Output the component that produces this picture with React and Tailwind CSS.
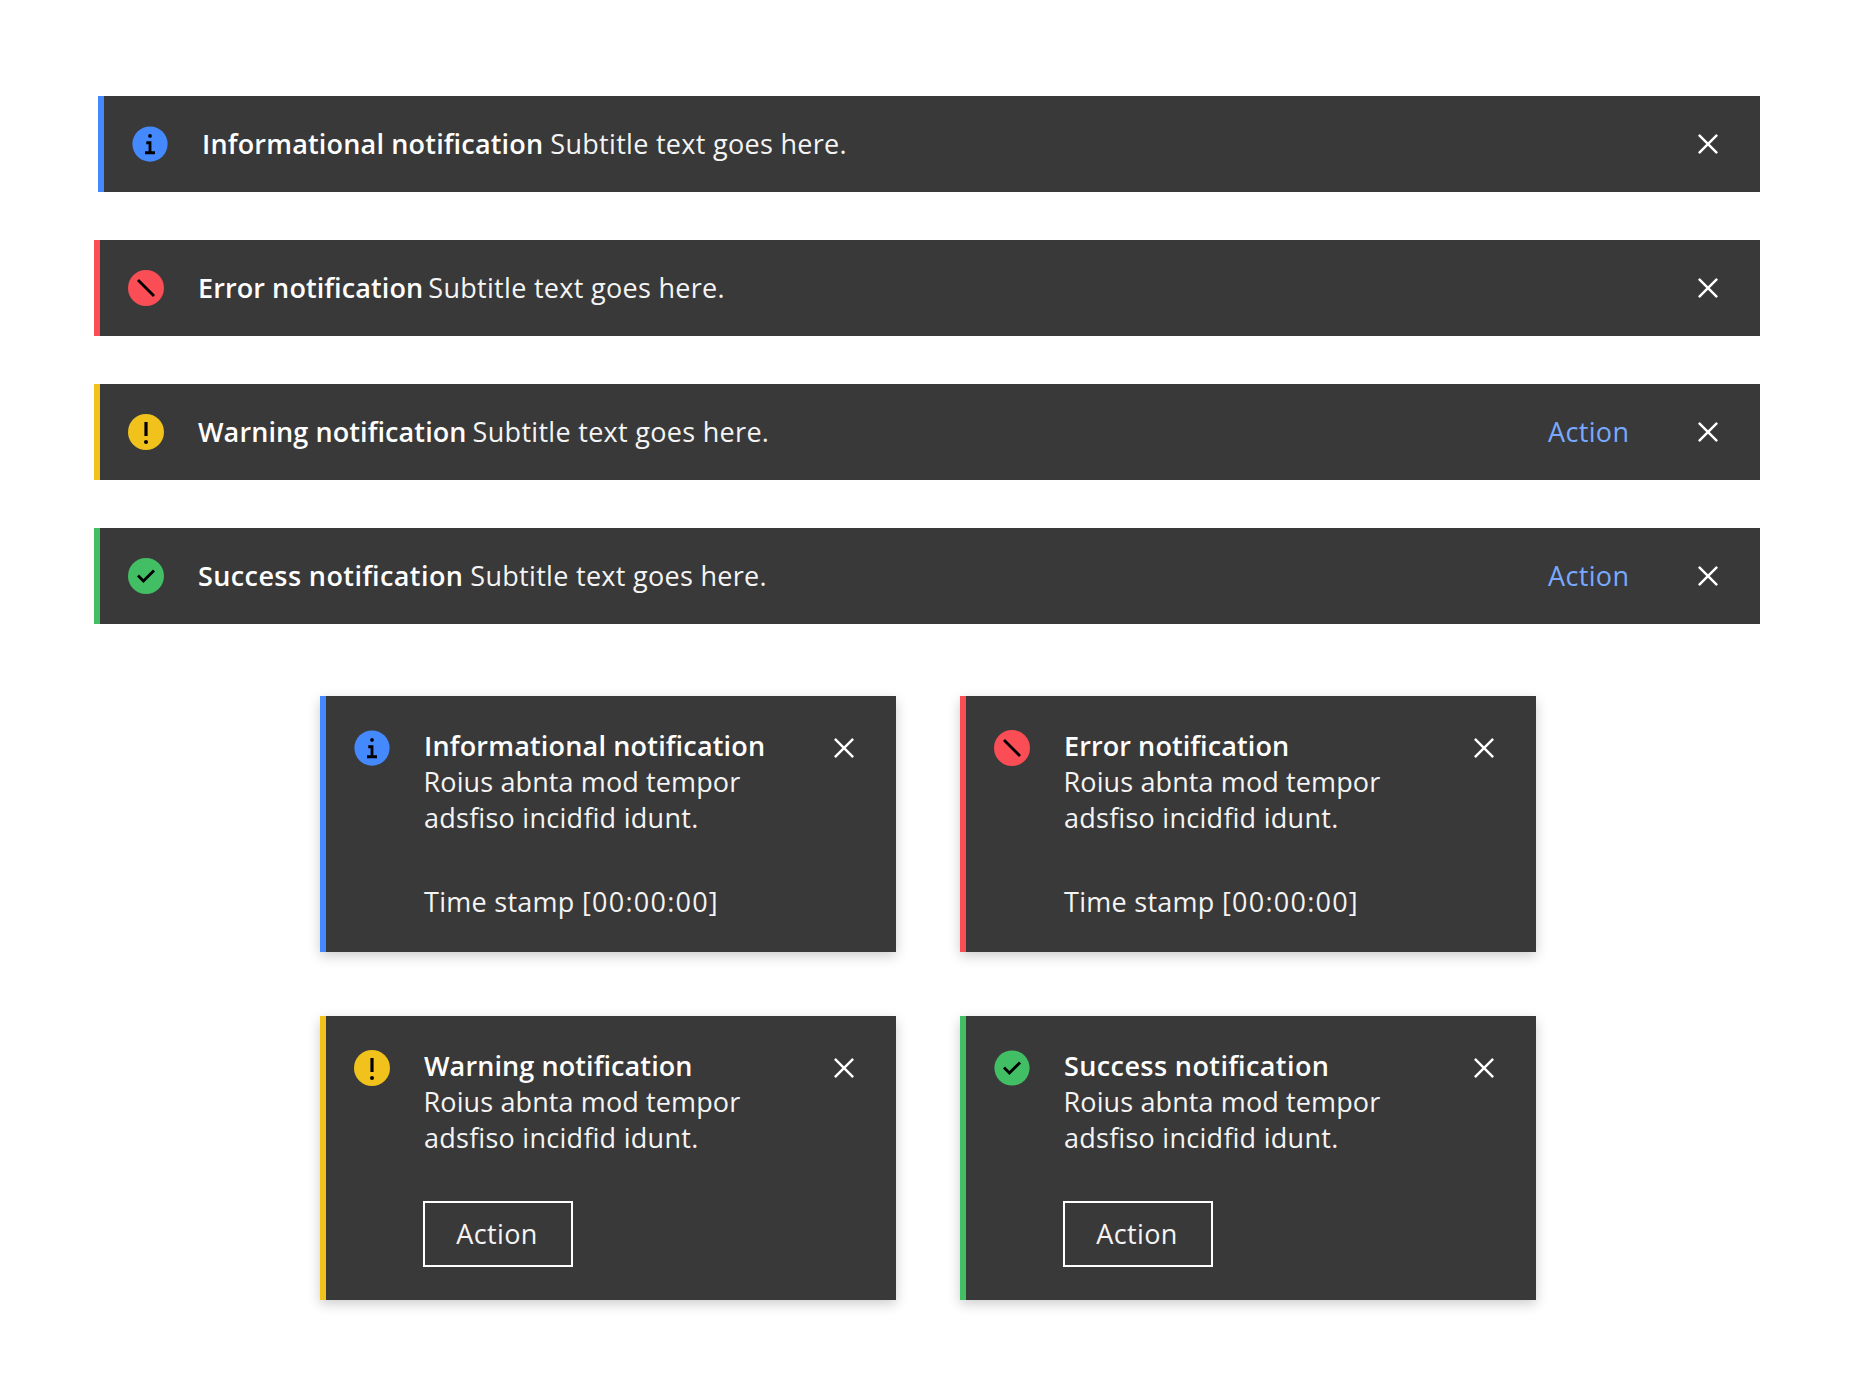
const KINDS = {
  info: {
    border: 'border-[#4589ff]',
    title: 'Informational notification',
    titleClass: 'tracking-[0.18px]',
    gap: 'ml-[7px]',
  },
  error: {
    border: 'border-[#fa4d56]',
    title: 'Error notification',
    titleClass: 'tracking-[0.1px]',
    gap: 'ml-[5px]',
  },
  warning: {
    border: 'border-[#f1c21b]',
    title: 'Warning notification',
    titleClass: 'tracking-[0.1px]',
    gap: 'ml-[6px]',
  },
  success: {
    border: 'border-[#42be65]',
    title: 'Success notification',
    titleClass: 'tracking-[0.4px]',
    gap: 'ml-[7px]',
  },
};

function StatusIcon({ kind, small }) {
  if (kind === 'info') {
    return (
      <svg className="size-10 shrink-0" viewBox="0 0 32 32">
        <circle cx="16" cy="16" r="14.1" fill="#4589ff" />
        <path d="M16 8a1.5 1.5 0 1 1-1.5 1.5A1.5 1.5 0 0 1 16 8Zm4 16.125h-8v-2.25h2.875v-5.75H13v-2.25h4.125v8H20Z" fill="#000" />
      </svg>
    );
  }
  if (kind === 'error') {
    return (
      <svg className="size-10 shrink-0" viewBox="0 0 20 20">
        <circle cx="10" cy="10" r="9" fill="#fa4d56" />
        <path d="M13.5 14.5l-8-8 1-1 8 8z" fill="#000" />
      </svg>
    );
  }
  if (kind === 'warning') {
    return (
      <svg className="size-10 shrink-0" viewBox="0 0 20 20">
        <circle cx="10" cy="10" r="9" fill="#f1c21b" />
        <path d="M9.2 5h1.6v7H9.2z" fill="#000" />
        <circle cx="10" cy="15" r="1" fill="#000" />
      </svg>
    );
  }
  return (
    <svg className="size-10 shrink-0" viewBox="0 0 20 20">
      <circle cx="10" cy="10" r={small ? 8.8 : 9} fill="#42be65" />
      <path d="M8.7 13.5l-3.2-3.2 1-1 2.2 2.2 4.8-4.8 1 1z" fill="#000" />
    </svg>
  );
}

function CloseButton() {
  return (
    <button aria-label="Close" className="size-10 shrink-0">
      <svg className="size-10" viewBox="0 0 32 32" fill="#fff">
        <path d="M24 9.4L22.6 8 16 14.6 9.4 8 8 9.4 14.6 16 8 22.6 9.4 24 16 17.4 22.6 24 24 22.6 17.4 16z" />
      </svg>
    </button>
  );
}

function Title({ kind }) {
  const { title, titleClass } = KINDS[kind];
  return <span className={`block font-semibold text-white ${titleClass}`}>{title}</span>;
}

function InlineNotification({ kind, action, className = '' }) {
  return (
    <div className={`flex h-24 items-center border-l-[6px] bg-[#393939] pr-8 pl-[26px] ${KINDS[kind].border} ${className}`}>
      <StatusIcon kind={kind} />
      <p className="ml-8 flex flex-1">
        <Title kind={kind} />
        <span className={`tracking-[0.3px] ${KINDS[kind].gap}`}>Subtitle text goes here.</span>
      </p>
      {action && <button className="mr-[60px] w-20 text-left tracking-[0.35px] text-[#78a9ff]">Action</button>}
      <CloseButton />
    </div>
  );
}

function ToastNotification({ kind, action }) {
  return (
    <div
      className={`flex items-start border-l-[6px] bg-[#393939] pt-8 pr-8 pl-[26px] shadow-[0_4px_12px_rgba(0,0,0,0.2)] ${
        action ? 'h-[284px]' : 'h-64'
      } ${KINDS[kind].border}`}
    >
      <StatusIcon kind={kind} small />
      <div className="ml-8 flex-1">
        <Title kind={kind} />
        <p className="-ml-[0.5px] tracking-[0.12px]">Roius abnta mod tempor</p>
        <p className="tracking-[0.28px]">adsfiso incidfid idunt.</p>
        {action ? (
          <button className="mt-[45px] -ml-px h-[66px] w-[150px] border-2 border-white pr-0.5 pb-px tracking-[0.35px]">
            Action
          </button>
        ) : (
          <p className="mt-12 tracking-[0.28px]">
            Time stamp <span className="tracking-[1.25px]">[00:00:00]</span>
          </p>
        )}
      </div>
      <CloseButton />
    </div>
  );
}

export default function App() {
  return (
    <main className="min-h-screen bg-white pt-24 font-['Open_Sans',sans-serif] text-[27px] leading-9 text-[#f4f4f4] [font-feature-settings:'liga'_1]">
      <section className="mr-24 ml-[94px] flex flex-col gap-12">
        <InlineNotification kind="info" className="ml-1" />
        <InlineNotification kind="error" />
        <InlineNotification kind="warning" action />
        <InlineNotification kind="success" action />
      </section>
      <section className="mx-auto mt-[72px] grid w-[1216px] grid-cols-2 gap-16">
        <ToastNotification kind="info" />
        <ToastNotification kind="error" />
        <ToastNotification kind="warning" action />
        <ToastNotification kind="success" action />
      </section>
    </main>
  );
}
